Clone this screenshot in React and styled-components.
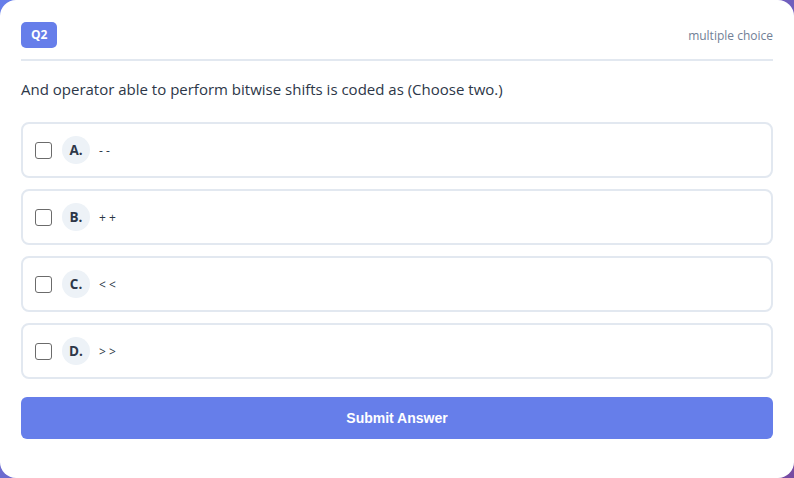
import React, { useState } from "react";
import styled, { createGlobalStyle } from "styled-components";

const GlobalStyle = createGlobalStyle`
  html, body {
    margin: 0;
    padding: 0;
    height: 100%;
  }
  body {
    background: linear-gradient(135deg, #667eea 0%, #764ba2 100%);
    font-family: "Open Sans", "Noto Sans", sans-serif;
  }
  * { box-sizing: border-box; }
`;

const options = [
  { letter: "A", text: "- -" },
  { letter: "B", text: "+ +" },
  { letter: "C", text: "< <" },
  { letter: "D", text: "> >" },
];

const App = () => {
  const [checked, setChecked] = useState({});

  const toggle = (letter) =>
    setChecked((prev) => ({ ...prev, [letter]: !prev[letter] }));

  return (
    <>
      <GlobalStyle />
      <Card>
        <Header>
          <Badge>Q2</Badge>
          <Type>multiple choice</Type>
        </Header>
        <Question>
          And operator able to perform bitwise shifts is coded as (Choose two.)
        </Question>
        <OptionList>
          {options.map((opt) => (
            <Option key={opt.letter}>
              <Check
                type="checkbox"
                checked={!!checked[opt.letter]}
                onChange={() => toggle(opt.letter)}
              />
              <Letter>{opt.letter}.</Letter>
              <OptionText>{opt.text}</OptionText>
            </Option>
          ))}
        </OptionList>
        <SubmitButton>Submit Answer</SubmitButton>
      </Card>
    </>
  );
};

const Card = styled.div`
  background: #ffffff;
  border-radius: 16px;
  min-height: 478px;
  padding: 22px 21px 21px;
`;

const Header = styled.div`
  display: flex;
  justify-content: space-between;
  align-items: center;
  padding-bottom: 11px;
  border-bottom: 2px solid #e2e8f0;
`;

const Badge = styled.span`
  background: #667eea;
  color: #ffffff;
  font-weight: 700;
  font-size: 12px;
  line-height: 26px;
  padding: 0 10px;
  border-radius: 5px;
`;

const Type = styled.span`
  color: #718096;
  font-size: 12px;
`;

const Question = styled.p`
  margin: 16px 0 21px;
  font-size: 15px;
  line-height: 24px;
  color: #2d3748;
`;

const OptionList = styled.div`
  display: flex;
  flex-direction: column;
  gap: 11px;
`;

const Option = styled.label`
  display: flex;
  align-items: center;
  height: 56px;
  padding: 0 12px;
  border: 2px solid #e2e8f0;
  border-radius: 8px;
  cursor: pointer;
`;

const Check = styled.input`
  appearance: none;
  width: 17px;
  height: 17px;
  margin: 0 10px 0 0;
  border: 1.5px solid #6b6b6b;
  border-radius: 3px;
  background: #fff;
  &:checked {
    background: #667eea;
    border-color: #667eea;
  }
`;

const Letter = styled.span`
  display: flex;
  align-items: center;
  justify-content: center;
  width: 28px;
  height: 28px;
  border-radius: 50%;
  background: #edf2f7;
  color: #2d3748;
  font-weight: 700;
  font-size: 13.5px;
  margin-right: 9px;
`;

const OptionText = styled.span`
  color: #2d3748;
  font-size: 12px;
`;

const SubmitButton = styled.button`
  display: block;
  width: 100%;
  margin-top: 18px;
  height: 42px;
  border: none;
  border-radius: 6px;
  background: #667eea;
  color: #ffffff;
  font-family: "Liberation Sans", Arial, sans-serif;
  font-weight: 700;
  font-size: 14px;
  cursor: pointer;
`;

export default App;
